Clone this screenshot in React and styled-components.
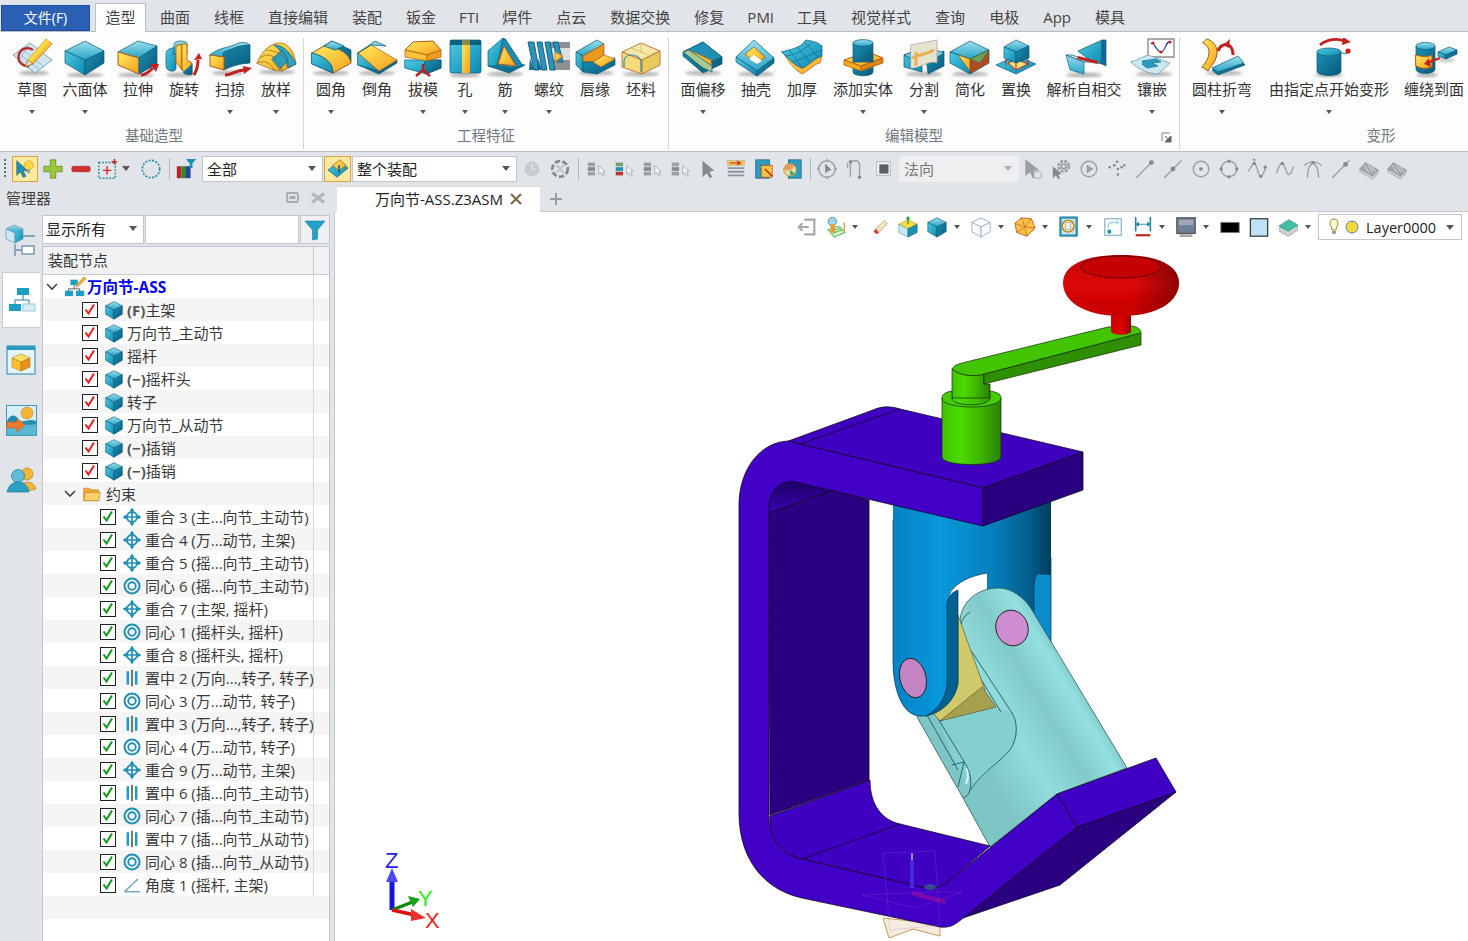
import React from "react";
import styled, { createGlobalStyle } from "styled-components";

const GlobalStyle = createGlobalStyle`
  html, body {
    margin: 0;
    width: 1468px;
    height: 941px;
    overflow: hidden;
    background: #e1e4e8;
    font-family: "Open Sans", "Noto Sans CJK SC", sans-serif;
    color: #333;
  }
  svg { display: block; flex: none; }
`;

const Page = styled.div`
  display: flex;
  flex-direction: column;
  width: 1468px;
  height: 941px;
  overflow: hidden;
`;

/* ---------- tab strip ---------- */
const TabBar = styled.div`
  display: flex;
  align-items: flex-end;
  height: 31px;
  padding-left: 1px;
  background: #e1e4e8;
  border-bottom: 1px solid #b9bec4;
`;
const FileButton = styled.div`
  width: 89px;
  height: 26px;
  margin: 0 5px 0 0;
  line-height: 24px;
  box-sizing: border-box;
  text-align: center;
  color: #fff;
  font-size: 14px;
  background: #2b5fb4;
  border: 1px solid #1c4ea3;
`;
const RibbonTab = styled.div`
  height: ${(p) => (p.$active ? "28px" : "27px")};
  line-height: 27px;
  padding: 0 ${(p) => (p.$active ? "9.5px" : p.$latin ? "11px" : "12px")};
  margin-right: ${(p) => (p.$active ? "2px" : "0")};
  margin-bottom: ${(p) => (p.$active ? "-1px" : "0")};
  font-size: 15px;
  color: #444;
  ${(p) =>
    p.$active &&
    `background:#fdfdfd;border:1px solid #b9bec4;border-bottom:none;`}
`;

/* ---------- ribbon ---------- */
const Ribbon = styled.div`
  display: flex;
  height: 119px;
  padding-top: 6px;
  box-sizing: border-box;
  background: #fdfdfd;
`;
const Group = styled.div`
  position: relative;
  display: flex;
  flex-direction: column;
  flex: none;
  box-sizing: border-box;
  width: ${(p) => p.$w}px;
  height: 111px;
  padding-left: ${(p) => p.$pad}px;
  border-right: ${(p) => (p.$last ? "none" : "1px solid #d3d5d8")};
`;
const GroupItems = styled.div`
  display: flex;
`;
const Item = styled.div`
  display: flex;
  flex-direction: column;
  align-items: center;
  flex: none;
  width: ${(p) => p.$w}px;
`;
const ItemLabel = styled.div`
  margin-top: 1px;
  height: 20px;
  line-height: 20px;
  font-size: 15px;
  color: #333;
  white-space: nowrap;
`;
const Caret = styled.span`
  display: block;
  flex: none;
  width: 0;
  height: 0;
  border-style: solid;
  border-width: ${(p) => (p.$big ? "5px 4px 0" : "4px 3.5px 0")};
  border-color: ${(p) => p.$c || "#555"} transparent transparent;
`;
const ItemCaret = styled(Caret)`
  margin-top: 11px;
`;
const GroupFoot = styled.div`
  margin-top: auto;
  height: 25px;
  line-height: 24px;
  padding-left: ${(p) => p.$shift || 0}px;
  padding-right: ${(p) => p.$back || 0}px;
  text-align: center;
  font-size: 14.5px;
  color: #717780;
`;
const Launcher = styled.div`
  position: absolute;
  right: 7px;
  bottom: 6px;
`;

/* ---------- command toolbar ---------- */
const ToolBar = styled.div`
  display: flex;
  align-items: center;
  height: 34px;
  padding-left: 4px;
  box-sizing: border-box;
  background: #e1e4e8;
  border-top: 1px solid #b8bec6;
`;
const Grip = styled.div`
  width: 2px;
  height: 20px;
  background: repeating-linear-gradient(#5a6b96 0 2px, transparent 2px 4px);
`;
const Slot = styled.div`
  display: flex;
  align-items: center;
  justify-content: center;
  flex: none;
  width: ${(p) => p.$w || 28}px;
  margin-left: ${(p) => p.$ml || 0}px;
`;
const Hot = styled(Slot)`
  height: 26px;
  box-sizing: border-box;
  background: #fde9a0;
  border: 1px solid #d9a441;
`;
const Sep = styled.div`
  flex: none;
  width: 1px;
  height: 22px;
  margin-left: ${(p) => p.$ml || 0}px;
  background: #b5b9bf;
`;
const Combo = styled.div`
  display: flex;
  align-items: center;
  justify-content: space-between;
  flex: none;
  box-sizing: border-box;
  width: ${(p) => p.$w}px;
  height: 26px;
  margin-left: ${(p) => p.$ml || 0}px;
  padding: 0 6px 1px 4px;
  font-size: 15px;
  color: ${(p) => (p.$off ? "#777" : "#222")};
  background: ${(p) => (p.$off ? "#eeeff0" : "#fff")};
  border: 1px solid ${(p) => (p.$off ? "#eeeff0" : "#c3c7cc")};
`;

/* ---------- manager title + document tabs ---------- */
const TitleRow = styled.div`
  display: flex;
  height: 27px;
  background: #e1e4e8;
`;
const ManagerHead = styled.div`
  display: flex;
  align-items: center;
  flex: none;
  box-sizing: border-box;
  width: 337px;
  padding: 0 11px 2px 6px;
  font-size: 15px;
  color: #444;
`;
const ManagerName = styled.span`
  margin-right: auto;
`;
const DocTabs = styled.div`
  display: flex;
  flex: 1;
  box-sizing: border-box;
  padding-top: 1px;
  border-bottom: 1px solid #c4c8cd;
`;
const DocTab = styled.div`
  display: flex;
  align-items: center;
  box-sizing: border-box;
  width: 203px;
  height: 26px;
  padding: 0 0 2px 38px;
  font-size: 15px;
  color: #222;
  background: #fff;
  border-top: 1px solid #d7dade;
`;
const DocClose = styled.span`
  margin-left: 7px;
`;
const AddTab = styled.div`
  margin-left: 9px;
  align-self: center;
`;

/* ---------- body ---------- */
const Body = styled.div`
  display: flex;
  flex: 1;
  min-height: 0;
`;
const Side = styled.div`
  display: flex;
  flex: none;
  width: 335px;
  background: #e1e4e8;
  border-right: 1px solid #c4c8cd;
  box-sizing: border-box;
`;
const Rail = styled.div`
  display: flex;
  flex-direction: column;
  gap: 4px;
  flex: none;
  width: 42px;
`;
const RailTab = styled.div`
  display: flex;
  align-items: center;
  justify-content: center;
  box-sizing: border-box;
  height: 56px;
  margin: 0 2px;
  ${(p) => p.$active && `background:#fff;border:1px solid #c8ccd1;border-right:none;`}
`;
const ManagerPane = styled.div`
  display: flex;
  flex-direction: column;
  flex: none;
  width: 288px;
  padding-top: 3px;
`;
const FilterRow = styled.div`
  display: flex;
  gap: 1px;
  height: 29px;
  margin-bottom: 2px;
`;
const FilterCombo = styled.div`
  display: flex;
  align-items: center;
  justify-content: space-between;
  box-sizing: border-box;
  width: ${(p) => p.$w}px;
  padding: 0 6px 2px 3px;
  font-size: 15px;
  color: #222;
  background: #fff;
  border: 1px solid #c3c7cc;
`;
const FilterButton = styled(FilterCombo)`
  justify-content: center;
  padding: 0;
  background: #eef0f2;
`;
const TreePane = styled.div`
  flex: 1;
  background: #fff;
  border: 1px solid #c3c7cc;
  border-bottom: none;
`;
const TreeHead = styled.div`
  display: flex;
  height: 28px;
  background: #f0f1f3;
  border-bottom: 1px solid #c6cacf;
  box-sizing: border-box;
`;
const TreeHeadCell = styled.div`
  width: 271px;
  padding-left: 5px;
  box-sizing: border-box;
  line-height: 27px;
  font-size: 15px;
  color: #333;
  border-right: 1px solid #c6cacf;
`;
const Row = styled.div`
  height: 23px;
  background: ${(p) => (p.$odd ? "#f5f5f5" : "#fff")};
`;
const RowMain = styled.div`
  display: flex;
  align-items: center;
  box-sizing: border-box;
  width: 271px;
  height: 23px;
  padding-left: ${(p) => p.$indent}px;
  border-right: 1px solid #d4d7db;
  font-size: 15px;
  color: #3a3a3a;
  white-space: nowrap;
`;
const Expander = styled.span`
  display: block;
  width: 18px;
`;
const CheckBox = styled.span`
  display: block;
  flex: none;
  box-sizing: border-box;
  width: 16px;
  height: 16px;
  margin-right: 6px;
  background: #fff;
  border: 1.5px solid #222;
`;
const RowIcon = styled.span`
  display: block;
  flex: none;
  margin-right: ${(p) => p.$mr}px;
`;
const RootLabel = styled.span`
  font-weight: 700;
  color: #0000ff;
  font-size: 15.5px;
`;
const Mark = styled.b`
  color: #555;
`;

/* ---------- viewport ---------- */
const Viewport = styled.div`
  display: flex;
  flex-direction: column;
  flex: 1;
  min-width: 0;
  background: #fff;
`;
const ViewBar = styled.div`
  display: flex;
  align-items: center;
  justify-content: flex-end;
  flex: none;
  height: 30px;
  padding-right: 6px;
`;
const LayerBox = styled.div`
  display: flex;
  align-items: center;
  box-sizing: border-box;
  width: 144px;
  height: 26px;
  margin-left: 5px;
  padding: 0 7px 0 10px;
  font-size: 14.5px;
  color: #222;
  background: #fff;
  border: 1px solid #c3c7cc;
`;
const LayerName = styled.span`
  margin: 0 auto 0 7px;
`;
const Scene = styled.svg`
  flex: none;
  width: 1133px;
  height: 699px;
`;

/* ---------- shared svg paint ---------- */
const Paint = () => (
  <svg width="0" height="0" style={{ position: "absolute" }}>
    <defs>
      <linearGradient id="rTop" x1="0" y1="0" x2="0" y2="1">
        <stop offset="0" stopColor="#9be0ee" />
        <stop offset="1" stopColor="#2aa3c4" />
      </linearGradient>
      <linearGradient id="rFront" x1="0" y1="0" x2="1" y2="1">
        <stop offset="0" stopColor="#4ecbe2" />
        <stop offset="1" stopColor="#0b88b0" />
      </linearGradient>
      <linearGradient id="rSide" x1="0" y1="0" x2="1" y2="1">
        <stop offset="0" stopColor="#1a93b6" />
        <stop offset="1" stopColor="#0a5878" />
      </linearGradient>
      <linearGradient id="rYel" x1="0" y1="0" x2="1" y2="1">
        <stop offset="0" stopColor="#ffec60" />
        <stop offset="1" stopColor="#f69f1c" />
      </linearGradient>
      <filter id="soft" x="-30%" y="-100%" width="160%" height="300%">
        <feGaussianBlur stdDeviation="1.4" />
      </filter>
      <linearGradient id="cBlue" gradientUnits="userSpaceOnUse" x1="893" y1="0" x2="1052" y2="0">
        <stop offset="0" stopColor="#0482c4" />
        <stop offset=".3" stopColor="#0898dc" />
        <stop offset=".62" stopColor="#0480bd" />
        <stop offset=".85" stopColor="#045f8e" />
        <stop offset="1" stopColor="#013c5c" />
      </linearGradient>
      <linearGradient id="cArm" gradientUnits="userSpaceOnUse" x1="893" y1="0" x2="1052" y2="0">
        <stop offset="0" stopColor="#0482c4" />
        <stop offset=".3" stopColor="#0898dc" />
        <stop offset=".62" stopColor="#0480bd" />
        <stop offset=".85" stopColor="#0484c4" />
        <stop offset="1" stopColor="#0898dc" />
      </linearGradient>
      <linearGradient id="cCyan" gradientUnits="userSpaceOnUse" x1="985" y1="770" x2="1095" y2="704">
        <stop offset="0" stopColor="#7ec6c6" />
        <stop offset=".35" stopColor="#92dcdc" />
        <stop offset=".65" stopColor="#82caca" />
        <stop offset=".88" stopColor="#94e0e0" />
        <stop offset="1" stopColor="#7cc4c4" />
      </linearGradient>
      <linearGradient id="cGreen" x1="0" y1="0" x2="1" y2="0">
        <stop offset="0" stopColor="#3fc000" />
        <stop offset=".3" stopColor="#4cdc00" />
        <stop offset=".6" stopColor="#40bc00" />
        <stop offset="1" stopColor="#2b8000" />
      </linearGradient>
      <linearGradient id="cKnob" x1="0" y1="0" x2="0" y2="1">
        <stop offset="0" stopColor="#c00000" />
        <stop offset=".5" stopColor="#de0a0a" />
        <stop offset=".72" stopColor="#d00000" />
        <stop offset="1" stopColor="#c80000" />
      </linearGradient>
      <linearGradient id="cKnobShade" x1="0" y1="0" x2="1" y2="0">
        <stop offset=".6" stopColor="#500000" stopOpacity="0" />
        <stop offset="1" stopColor="#500000" stopOpacity=".55" />
      </linearGradient>
      <linearGradient id="cStem" x1="0" y1="0" x2="1" y2="0">
        <stop offset="0" stopColor="#cc0000" />
        <stop offset=".5" stopColor="#e00000" />
        <stop offset="1" stopColor="#980000" />
      </linearGradient>
      <linearGradient id="cArch" x1="0" y1="0" x2="0" y2="1">
        <stop offset="0" stopColor="#1a0060" />
        <stop offset="1" stopColor="#3a00b0" />
      </linearGradient>
    </defs>
  </svg>
);

const E = "#0a5a78";
const Soft = ({ cx = 24, cy = 37, rx = 18, ry = 2.6 }) => (
  <ellipse cx={cx} cy={cy} rx={rx} ry={ry} fill="#000" opacity=".28" filter="url(#soft)" />
);
const Poly = ({ p, f, s = E, w = 0.7 }) => <polygon points={p} fill={f} stroke={s} strokeWidth={w} strokeLinejoin="round" />;
const Dr = ({ d, f = "none", s = E, w = 0.7 }) => <path d={d} fill={f} stroke={s} strokeWidth={w} strokeLinejoin="round" strokeLinecap="round" />;
const RedArrow = ({ d, head }) => (
  <g>
    <path d={d} fill="none" stroke="#c3201f" strokeWidth="3" />
    <polygon points={head} fill="#c3201f" />
  </g>
);
const R = ({ children }) => (
  <svg width="48" height="40" viewBox="0 0 48 40">
    {children}
  </svg>
);

/* ---------- ribbon icons ---------- */
const RI = {
  sketch: (
    <R>
      <Soft cx="26" cy="35" rx="15" />
      <Poly p="5,17 22,5 44,22 27,35" f="#cfe6f0" s="#5a8ea8" />
      <path d="M14 11 L35 28 M9 14 L31 31 M20 7 L10 25 M30 13 L19 31" stroke="#7fb0c8" strokeWidth=".7" fill="none" />
      <path d="M25 12 A9 9 0 1 0 21 28" fill="none" stroke="#c32222" strokeWidth="2.2" />
      <Poly p="38,1 44,6 25,26 20,22" f="url(#rYel)" s="#b8690f" />
      <Poly p="20,22 25,26 17,29" f="#f3e0b8" s="#7a5a20" />
      <Poly p="38,1 41,3.5 23,24 20,22" f="#ffd845" s="none" w={0} />
    </R>
  ),
  hex: (
    <R>
      <Soft />
      <Poly p="24,3 43,13 24,22 4,13" f="url(#rTop)" />
      <Poly p="4,13 24,22 24,37 4,25" f="url(#rFront)" />
      <Poly p="24,22 43,13 43,25 24,37" f="url(#rSide)" />
    </R>
  ),
  extrude: (
    <R>
      <Soft cx="22" />
      <Poly p="4,14 24,3 43,8 25,20" f="url(#rTop)" />
      <Poly p="4,14 25,20 25,36 4,27" f="url(#rYel)" s="#b35a12" w={1} />
      <Poly p="25,20 43,8 43,26 25,36" f="url(#rSide)" />
      <RedArrow d="M27 37 C32 37 36 33 39 30" head="36,26 45,26 42,34" />
    </R>
  ),
  revolve: (
    <R>
      <Soft cx="20" rx="14" />
      <Dr d="M6 16 C6 11 12 9 16 10 L16 30 C16 35 6 34 6 28 Z" f="url(#rFront)" />
      <Dr d="M14 6 C14 2 27 2 27 6 L27 16 L14 16 Z" f="url(#rTop)" />
      <Poly p="16,8 22,6 22,32 16,24" f="url(#rYel)" s="#b35a12" w={.9} />
      <Poly p="22,6 27,6 27,22 32,25 32,37 22,32" f="url(#rYel)" s="#b35a12" w={.9} />
      <Dr d="M32 26 L32 36 C28 38 24 36 23 34" f="url(#rSide)" />
      <RedArrow d="M34 37 C37 32 38 27 38 22" head="34,22 42,21 39,15" />
    </R>
  ),
  sweep: (
    <R>
      <Soft cx="22" cy="35" rx="16" />
      <Dr d="M4 17 C14 11 20 13 28 10 C34 8 39 6 44 7 L44 25 C34 26 28 27 18 32 Z" f="url(#rSide)" />
      <Dr d="M4 17 C12 10 20 10 28 7 C34 4 38 3 44 7 C38 7 32 8 28 10 C22 13 14 13 18 19 Z" f="url(#rTop)" />
      <Poly p="4,17 18,19 18,32 4,28" f="url(#rYel)" s="#b35a12" w={1} />
      <RedArrow d="M19 37 C26 37 30 32 38 32" head="37,28 46,30 38,36" />
    </R>
  ),
  loft: (
    <R>
      <Soft cx="25" cy="34" />
      <Dr d="M5 25 C10 12 20 4 30 5 C38 7 43 16 44 26 L30 33 L22 32 Z" f="url(#rYel)" s="#9a5a14" />
      <Dr d="M22 7 C30 7 37 12 44 26 L36 30 C33 20 30 13 22 7 Z" f="#2aa3c4" />
      <Dr d="M20 21 L30 12 L36 22 L28 31 Z" f="#25a0c0" />
      <Dr d="M5 25 C12 22 18 24 22 32 M8 20 C16 14 24 16 30 33 M14 12 C24 12 34 18 38 29" s="#9a5a14" />
    </R>
  ),
  fillet: (
    <R>
      <Soft cx="24" cy="35" />
      <Dr d="M5 15 L25 3 L44 12 L44 25 L26 35 L5 26 Z" f="url(#rSide)" />
      <Dr d="M5 15 L17 8 C34 10 42 16 44 25 L26 35 C26 24 17 18 5 15 Z" f="url(#rYel)" s="#b35a12" />
      <Dr d="M5 15 C17 18 26 24 26 35 L5 26 Z" f="url(#rFront)" />
      <Poly p="17,8 25,3 37,8 28,12" f="url(#rTop)" />
    </R>
  ),
  chamfer: (
    <R>
      <Soft cx="24" cy="35" />
      <Poly p="5,15 5,27 26,36 44,25 44,22 26,33" f="url(#rSide)" />
      <Dr d="M5 15 L26 33 L5 27 Z" f="url(#rFront)" />
      <Poly p="18,7 44,22 26,33 5,15" f="url(#rYel)" s="#b35a12" />
      <Poly p="5,15 22,3 33,8 18,7" f="url(#rTop)" />
    </R>
  ),
  draft: (
    <R>
      <Dr d="M6 22 L42 22 L42 30 L27 36 L6 30 Z" f="url(#rFront)" />
      <Poly p="25,22 42,22 42,30 27,36" f="url(#rSide)" />
      <Poly p="14,4 34,3 42,12 28,17 6,12" f="url(#rYel)" s="#b35a12" w={1} />
      <Poly p="6,12 28,17 28,23 6,19" f="#f8c43a" s="#b35a12" />
      <Poly p="28,17 42,12 42,19 28,23" f="#ea9d1e" s="#b35a12" />
      <path d="M24 26 L24 32 M24 32 L17 38 M24 32 L31 38" stroke="#bb1d1d" strokeWidth="2.4" fill="none" />
    </R>
  ),
  hole: (
    <R>
      <Soft cy="37" rx="15" />
      <rect x="9" y="2" width="31" height="33" rx="2" fill="url(#rFront)" stroke={E} strokeWidth=".7" />
      <rect x="21" y="2" width="8" height="33" fill="url(#rYel)" />
      <rect x="9" y="2" width="31" height="5" fill="#0f5f80" />
      <rect x="21" y="2" width="8" height="5" fill="#8a8a50" />
    </R>
  ),
  rib: (
    <R>
      <Soft cx="24" cy="36" />
      <Poly p="7,28 24,24 44,27 28,35" f="url(#rSide)" />
      <Poly p="7,13 22,0 25,2 16,28 7,28" f="url(#rFront)" />
      <Poly p="22,0 25,2 42,28 30,30 16,28" f="#1a8bb2" />
      <Poly p="23,8 35,28 17,26" f="url(#rYel)" s="#b35a12" w={1} />
    </R>
  ),
  thread: (
    <R>
      <rect x="25" y="4" width="20" height="28" fill="#8d9094" />
      <rect x="25" y="10" width="20" height="12" fill="#dcdedf" />
      <path d="M3 4 L9 4 L14 32 L9 32 Z M12 4 L17 4 L22 32 L17 32 Z M20 4 L25 4 L30 32 L25 32 Z M28 4 L33 4 L38 24 L33 24 Z" fill="#2c93bd" stroke="#0b5a7a" strokeWidth=".9" />
      <path d="M4 32 L5 20 L9 32 Z M12 32 L13 20 L17 32 Z" fill="#1a6d92" />
      <Poly p="30,14 38,18 30,24" f="url(#rYel)" s="#b35a12" />
    </R>
  ),
  lip: (
    <R>
      <Soft cx="25" cy="35" />
      <Poly p="5,14 26,2 33,6 12,18" f="url(#rTop)" />
      <Poly p="5,14 12,18 12,34 5,27" f="url(#rFront)" />
      <Poly p="12,18 33,6 33,17 22,24 12,24" f="#e79a1d" s="#a3560e" />
      <Poly p="12,34 12,24 22,24 44,20 44,27 26,36" f="url(#rSide)" />
      <Poly p="22,24 33,17 44,21 30,29" f="url(#rYel)" s="#b35a12" />
    </R>
  ),
  blank: (
    <R>
      <Soft cy="36" />
      <Poly p="5,14 24,5 43,13 25,22" f="#f6e8a8" s="#c07a40" w={1} />
      <Poly p="5,14 25,22 25,36 5,29" f="#f6dc7a" s="#c07a40" w={1} />
      <Poly p="25,22 43,13 43,27 25,36" f="#e9c95c" s="#c07a40" w={1} />
      <path d="M7 29 L7 23 C7 15 22 15 24 23 L24 34" fill="none" stroke="#2f8aa6" strokeWidth="1.2" />
      <path d="M14 10 L34 18 M24 5 L24 15" stroke="#d6b76a" strokeWidth=".8" />
    </R>
  ),
  offset: (
    <R>
      <Soft cy="35" />
      <Poly p="4,14 24,4 43,19 43,26 24,35 4,18" f="url(#rSide)" />
      <Poly p="4,14 24,4 43,19 25,27" f="#1f8fb4" />
      <Poly p="4,14 25,27 33,28 32,22 10,12" f="url(#rYel)" s="#b35a12" />
      <Poly p="4,14 10,12 33,28 33,34 24,30" f="#a8c890" s={E} />
    </R>
  ),
  shell: (
    <R>
      <Soft cy="36" />
      <Poly p="4,19 22,2 42,20 25,33" f="url(#rTop)" />
      <Poly p="4,19 25,33 25,38 4,24" f="url(#rFront)" />
      <Poly p="25,33 42,20 42,25 25,38" f="url(#rSide)" />
      <Poly p="13,16 22,9 33,19 25,26" f="url(#rYel)" s="#a3560e" />
      <Poly p="17,21 22,17 30,23 25,26" f="#fff" s="none" w={0} />
    </R>
  ),
  thicken: (
    <R>
      <Dr d="M4 14 C9 18 11 28 24 36 C32 32 36 26 42 25 L44 18 C38 20 30 28 24 30 C14 26 10 18 4 14 Z" f="url(#rYel)" s="#b35a12" />
      <Dr d="M4 14 C12 11 22 11 28 2 C34 3 40 4 44 8 C44 14 44 18 44 18 C36 20 30 28 24 30 C14 26 10 20 4 14 Z" f="url(#rFront)" />
      <path d="M11 12 C16 18 20 24 24 30 M19 9 C24 15 29 20 33 25 M26 4 C31 9 36 13 40 20 M7 18 C16 17 24 14 33 5 M14 24 C22 22 32 16 44 12" stroke="#0d6c92" strokeWidth=".7" fill="none" />
    </R>
  ),
  addsolid: (
    <R>
      <Dr d="M14 24 L14 34 C14 39 34 39 34 34 L34 24 Z" f="url(#rSide)" />
      <Poly p="5,22 29,14 44,20 22,28" f="url(#rYel)" s="#b35a12" w={1} />
      <Poly p="5,22 22,28 22,33 5,27" f="#f1a91d" s="#b35a12" />
      <Poly p="22,28 44,20 44,25 22,33" f="#d98716" s="#b35a12" />
      <rect x="14" y="5" width="20" height="19" fill="url(#rSide)" stroke={E} strokeWidth=".7" />
      <ellipse cx="24" cy="5" rx="10" ry="3.4" fill="url(#rTop)" stroke={E} strokeWidth=".7" />
    </R>
  ),
  split: (
    <R>
      <Soft cy="36" />
      <Poly p="4,17 22,10 22,34 4,29" f="url(#rFront)" />
      <Poly p="4,17 17,12 30,22 20,25" f="url(#rTop)" />
      <Poly p="26,20 44,13 44,28 28,36" f="url(#rSide)" />
      <Poly p="26,20 36,12 44,15 30,24" f="url(#rTop)" />
      <Dr d="M11 7 L37 2 L37 25 C30 22 24 28 14 30 L11 30 Z" f="#e8e3d0" s="#9aa0a4" />
      <path d="M16 28 L16 14 M12 20 C20 16 28 16 34 12" stroke="#e79a1d" strokeWidth="3" fill="none" opacity=".7" />
    </R>
  ),
  simplify: (
    <R>
      <Soft cy="36" />
      <Poly p="4,14 24,3 43,12 24,21" f="url(#rTop)" />
      <Poly p="24,21 43,12 43,25 24,36" f="#b44a22" />
      <Poly p="4,14 24,21 24,36 4,25" f="url(#rFront)" />
      <Poly p="12,17 24,21 24,33" f="url(#rYel)" s="#a3560e" />
      <Poly p="24,21 43,12 34,25" f="#6fa05a" s="#486f38" />
    </R>
  ),
  replace: (
    <R>
      <Poly p="4,27 24,18 44,26 24,36" f="url(#rFront)" />
      <Poly p="16,25 24,21 36,26 24,32" f="#f7dc78" s="#b32222" w={1} />
      <Poly p="12,9 24,2 37,8 24,14" f="url(#rTop)" />
      <Poly p="12,9 24,14 24,25 12,20" f="url(#rFront)" />
      <Poly p="24,14 37,8 37,20 24,25" f="url(#rSide)" />
      <path d="M14 21 L14 27 M36 21 L36 27 M24 25 L24 32" stroke="#b32222" strokeWidth="1" />
    </R>
  ),
  selfint: (
    <R>
      <Soft cy="37" />
      <Poly p="6,17 24,24 24,36 10,32" f="url(#rTop)" s="#0d6c92" />
      <Poly p="6,17 12,17 32,24 24,24" f="#cfeaf1" />
      <Poly p="18,13 42,2 42,26 32,24" f="url(#rFront)" />
      <Poly p="42,2 46,2 46,28 42,26" f="#14698d" s={E} />
      <Poly p="18,18 38,23 37,26 17,21" f="#c32222" s="none" w={0} />
    </R>
  ),
  inlay: (
    <R>
      <Poly p="20,1 46,1 46,19 20,19" f="#fff" s="#8a8d90" w={1.4} />
      <path d="M23 6 C26 2 28 14 33 14 C38 14 37 2 43 4" fill="none" stroke="#2a3f9e" strokeWidth="1.2" />
      <circle cx="25" cy="5" r="1.6" fill="#c32222" />
      <circle cx="33" cy="14" r="1.6" fill="#c32222" />
      <circle cx="42" cy="4" r="1.6" fill="#c32222" />
      <Soft cx="26" cy="36" />
      <Dr d="M3 24 C10 22 14 19 20 17 L42 25 C38 29 34 32 30 36 C22 36 10 32 3 24 Z" f="#c9e8f0" s="#5a97b2" />
      <path d="M14 23 L28 21 L33 24 L24 25 L30 28 L19 30 L14 26" fill="#2d9bbd" stroke="#0d6c92" strokeWidth=".7" />
    </R>
  ),
  bend: (
    <R>
      <Soft cx="26" cy="35" />
      <Poly p="14,32 40,21 47,27 20,37" f="url(#rSide)" />
      <Poly p="14,30 40,18 46,25 20,34" f="url(#rTop)" />
      <Dr d="M9 1 C18 4 21 12 18 20 C16 26 12 29 10 33 L4 29 C8 24 11 20 11 14 C11 10 8 6 5 5 Z" f="url(#rYel)" s="#9a5a14" w={1} />
      <RedArrow d="M20 13 C22 7 28 5 32 8 C34 10 35 13 35 17" head="25,7 32,1 31,10" />
    </R>
  ),
  deform: (
    <R>
      <Soft cy="37" rx="14" />
      <path d="M12 14 L12 33 C12 39 36 39 36 33 L36 14 Z" fill="url(#rSide)" stroke={E} strokeWidth=".7" />
      <ellipse cx="24" cy="14" rx="12" ry="4" fill="url(#rFront)" stroke={E} strokeWidth=".7" />
      <path d="M36 14 C38 16 42 16 43 14" stroke="#0d6c92" fill="none" />
      <circle cx="43" cy="13" r="2.6" fill="#c32222" />
      <path d="M15 7 C22 1 32 0 40 3" stroke="#c32222" strokeWidth="2.6" fill="none" />
      <polygon points="38,-1 46,4 37,7" fill="#c32222" />
    </R>
  ),
  wrap: (
    <R>
      <Soft cx="17" rx="11" />
      <path d="M6 8 L6 31 C6 37 25 37 25 31 L25 8 Z" fill="url(#rSide)" stroke={E} strokeWidth=".7" />
      <ellipse cx="15.5" cy="8" rx="9.5" ry="3.6" fill="url(#rTop)" stroke={E} strokeWidth=".7" />
      <Dr d="M6 17 C12 19 18 19 22 17 L22 29 C16 31 12 31 6 28 Z" f="url(#rYel)" s="#b35a12" w={1} />
      <Soft cx="36" cy="22" rx="9" ry="1.6" />
      <Poly p="28,14 39,9 47,12 36,17" f="url(#rTop)" />
      <Poly p="28,14 36,17 36,21 28,18" f="url(#rFront)" />
      <Poly p="36,17 47,12 47,16 36,21" f="url(#rSide)" />
      <path d="M30 20 L17 25" stroke="#c32222" strokeWidth="2.2" />
      <polygon points="19,20 14,26 21,29" fill="#c32222" />
    </R>
  ),
};

/* ---------- little helpers for 24 x 24 icons ---------- */
const T = ({ s = 22, children }) => (
  <svg width={s} height={s} viewBox="0 0 24 24">
    {children}
  </svg>
);
const G = "#9ca0a5";
const GD = "#85898e";

const Cube = ({ s = 20, top = "url(#rTop)", l = "url(#rFront)", r = "url(#rSide)", e = "#0a5a78" }) => (
  <T s={s}>
    <polygon points="12,2 22,7 12,12 2,7" fill={top} stroke={e} strokeWidth=".7" />
    <polygon points="2,7 12,12 12,23 2,17" fill={l} stroke={e} strokeWidth=".7" />
    <polygon points="12,12 22,7 22,17 12,23" fill={r} stroke={e} strokeWidth=".7" />
  </T>
);
const GrayNode = ({ tint }) => (
  <T>
    <rect x="3" y="5" width="8" height="4" fill={tint ? "#7a9a70" : G} />
    <rect x="3" y="10" width="8" height="4" fill={tint ? "#1f8fb4" : GD} />
    <rect x="3" y="15" width="8" height="4" fill={tint ? "#b33" : G} />
    <path d="M15 8 L15 18 L17.5 16 L19 20 L21 19 L19.5 15 L22 15 Z" fill="#f4f5f6" stroke={G} strokeWidth=".8" />
  </T>
);
const GrayLine = ({ children }) => (
  <T>
    <g fill="none" stroke={G} strokeWidth="1.5" strokeLinecap="round">
      {children}
    </g>
  </T>
);
const Dot = ({ x, y, r = 1.8 }) => <circle cx={x} cy={y} r={r} fill={GD} stroke="none" />;
const GrayStack = () => (
  <T>
    <polygon points="2,12 8,5 22,13 16,20" fill="#a5a8ac" stroke="#7d8084" strokeWidth=".6" />
    <polygon points="2,15 16,23 22,16 22,13 16,20 2,12" fill="#d2d4d6" stroke="#7d8084" strokeWidth=".6" />
    <path d="M7 8 L12 16 M11 7 L16 15 M15 9 L19 15" stroke="#eee" strokeWidth=".8" />
  </T>
);

/* ---------- data ---------- */
const tabs = ["曲面", "线框", "直接编辑", "装配", "钣金", "FTI", "焊件", "点云", "数据交换", "修复", "PMI", "工具", "视觉样式", "查询", "电极", "App", "模具"];

const groups = [
  {
    label: "基础造型", w: 304, pad: 9, back: 4,
    items: [
      ["草图", 46, "sketch", 1], ["六面体", 60, "hex", 1], ["拉伸", 46, "extrude", 0],
      ["旋转", 46, "revolve", 0], ["扫掠", 46, "sweep", 1], ["放样", 46, "loft", 1],
    ],
  },
  {
    label: "工程特征", w: 365, pad: 4, back: 4,
    items: [
      ["圆角", 46, "fillet", 1], ["倒角", 46, "chamfer", 0], ["拔模", 46, "draft", 1],
      ["孔", 38, "hole", 1], ["筋", 42, "rib", 1], ["螺纹", 46, "thread", 1],
      ["唇缘", 46, "lip", 0], ["坯料", 46, "blank", 0],
    ],
  },
  {
    label: "编辑模型", w: 511, pad: 4, back: 24, launcher: true,
    items: [
      ["面偏移", 60, "offset", 1], ["抽壳", 46, "shell", 0], ["加厚", 46, "thicken", 0],
      ["添加实体", 76, "addsolid", 1], ["分割", 46, "split", 1], ["简化", 46, "simplify", 0],
      ["置换", 46, "replace", 0], ["解析自相交", 90, "selfint", 0], ["镶嵌", 46, "inlay", 1],
    ],
  },
  {
    label: "变形", w: 288, pad: 4, shift: 110, last: true,
    items: [
      ["圆柱折弯", 76, "bend", 1], ["由指定点开始变形", 138, "deform", 1], ["缠绕到面", 72, "wrap", 0],
    ],
  },
];

const parts = [
  [<><Mark>(F)</Mark>主架</>],
  ["万向节_主动节"],
  ["摇杆"],
  [<><Mark>(−)</Mark>摇杆头</>],
  ["转子"],
  ["万向节_从动节"],
  [<><Mark>(−)</Mark>插销</>],
  [<><Mark>(−)</Mark>插销</>],
];

const constraints = [
  ["coin", "重合 3 (主...向节_主动节)"],
  ["coin", "重合 4 (万...动节, 主架)"],
  ["coin", "重合 5 (摇...向节_主动节)"],
  ["conc", "同心 6 (摇...向节_主动节)"],
  ["coin", "重合 7 (主架, 摇杆)"],
  ["conc", "同心 1 (摇杆头, 摇杆)"],
  ["coin", "重合 8 (摇杆头, 摇杆)"],
  ["mid", "置中 2 (万向...,转子, 转子)"],
  ["conc", "同心 3 (万...动节, 转子)"],
  ["mid", "置中 3 (万向...,转子, 转子)"],
  ["conc", "同心 4 (万...动节, 转子)"],
  ["coin", "重合 9 (万...动节, 主架)"],
  ["mid", "置中 6 (插...向节_主动节)"],
  ["conc", "同心 7 (插...向节_主动节)"],
  ["mid", "置中 7 (插...向节_从动节)"],
  ["conc", "同心 8 (插...向节_从动节)"],
  ["angle", "角度 1 (摇杆, 主架)"],
];

const ConstraintIcon = ({ kind }) => {
  if (kind === "coin")
    return (
      <T s={20}>
        <circle cx="12" cy="12" r="6" fill="none" stroke="#1f8fb4" strokeWidth="2.4" />
        <path d="M12 2 V22 M2 12 H22" stroke="#1f8fb4" strokeWidth="2" />
        <path d="M12 1 L15 5 H9 Z M12 23 L15 19 H9 Z M1 12 L5 9 V15 Z M23 12 L19 9 V15 Z" fill="#1f8fb4" />
      </T>
    );
  if (kind === "conc")
    return (
      <T s={20}>
        <circle cx="12" cy="12" r="9" fill="none" stroke="#1f8fb4" strokeWidth="2.4" />
        <circle cx="12" cy="12" r="4.5" fill="none" stroke="#1f8fb4" strokeWidth="2.2" />
      </T>
    );
  if (kind === "mid")
    return (
      <T s={20}>
        <path d="M12 2 V22" stroke="#333" strokeWidth="1.6" />
        <path d="M7 4 V20 M17 4 V20" stroke="#1f9ac4" strokeWidth="3" />
      </T>
    );
  return (
    <T s={20}>
      <path d="M3 20 H22 M3 20 L19 5" stroke="#7aa9bd" strokeWidth="1.8" fill="none" />
    </T>
  );
};

const Chevron = () => (
  <svg width="12" height="8" viewBox="0 0 12 8">
    <path d="M1 1 L6 6 L11 1" fill="none" stroke="#444" strokeWidth="1.6" />
  </svg>
);
const Tick = ({ c }) => (
  <svg width="13" height="13" viewBox="0 0 13 13">
    <path d="M2.5 6.5 L5.5 10.5 L11 1.5" fill="none" stroke={c} strokeWidth="2" />
  </svg>
);

/* ---------- the model in the viewport ---------- */
const L = "#10082a";
const Model = () => (
  <Scene viewBox="335 242 1133 699">
    {/* origin plane under the part */}
    <polygon points="883,918 889,938 913,929 940,936 940,924" fill="#f5ece0" stroke="#c69a58" strokeWidth="1" />
    {/* blue yoke, far arm */}
    <path d="M987 560 L1051 560 L1051 650 L987 650 Z" fill="url(#cBlue)" />
    <path d="M1034 590 C1034 572 1042 560 1051 557 L1051 650 L1034 625 Z" fill="#0a8ccd" stroke="#00304c" strokeWidth=".7" />
    {/* cyan shaft and yoke */}
    <path d="M960 627 C958 605 975 588 998 588 C1012 588 1025 598 1032 610 L1127 768 L1057 794 L990 847 L963 798 L917 717 L935 690 Z" fill="url(#cCyan)" stroke="#184c50" strokeWidth=".7" />
    <path d="M940 721 L996 707 L1012 713 L1018 735 L1010 750 L970 790 L958 770 L937 717 Z" fill="#84cfcf" />
    <path d="M962 644 C958 630 960 618 970 612 M972 652 L1012 713 C1018 722 1018 738 1010 750 C1000 762 985 770 970 790 M960 645 L1001 712 M960 645 L972 652" fill="none" stroke="#174a4e" strokeWidth=".8" />
    <path d="M927 715 L958 770 M937 717 L965 763 C970 772 972 780 970 790 C968 796 966 797 963 798 M952 765 L964 762 L958 787" fill="none" stroke="#174a4e" strokeWidth=".8" />
    <path d="M966 768 C968 772 969 778 966 784" fill="none" stroke="#d6f4f4" strokeWidth="2" />
    {/* spider block */}
    <polygon points="958,615 985,690 940,721 933,713 958,685" fill="#d0ca6c" stroke="#4e4a22" strokeWidth=".6" />
    <polygon points="940,721 982,687 996,707" fill="#a5a14e" stroke="#4e4a22" strokeWidth=".6" />
    {/* blue yoke, barrel and near arm in one piece */}
    <path d="M893 500 H1051 V575 L987 573 C970 576 958 582 952 590 L947 604 V682 C947 695 940 708 926 716 L920 716 C905 716 893 695 893 660 Z" fill="url(#cBlue)" />
    <path d="M893 520 V660 C893 695 905 716 920 716 L926 716" fill="none" stroke="#00304c" strokeWidth=".7" />
    <path d="M987 573 C970 576 958 582 952 590" fill="none" stroke="#00304c" strokeWidth=".7" />
    <path d="M947 604 C948 597 952 592 958 590 L958 680 C958 696 945 712 926 716 C940 708 947 695 947 682 Z" fill="#00608f" stroke="#00304c" strokeWidth=".7" />
    <ellipse cx="913" cy="678" rx="13" ry="20" transform="rotate(-14 913 678)" fill="#c484c4" stroke="#111" strokeWidth=".8" />
    <ellipse cx="1012" cy="628" rx="16" ry="18" transform="rotate(-20 1012 628)" fill="#d08cd0" stroke="#111" strokeWidth=".8" />
    {/* bracket */}
    <polygon points="769,513 833,490 869,500 869,780 770,815" fill="#2b0080" stroke={L} strokeWidth=".8" />
    <polygon points="769,513 769,478 800,478 833,490" fill="url(#cArch)" stroke={L} strokeWidth=".8" />
    <path d="M770 816 L870 780 C870 805 882 820 900 824 L990 846 L950 880 C945 885 935 890 925 888 L802 859 C782 855 769 838 770 816 Z" fill="#3f00c2" stroke={L} strokeWidth=".8" />
    <line x1="802" y1="859" x2="900" y2="824" stroke={L} strokeWidth=".8" />
    <path d="M783 443 L873 410 C882 406 890 406 900 409 L1083 452 L983 488 L800 444 Z" fill="#3f00c0" stroke={L} strokeWidth=".8" />
    <line x1="800" y1="444" x2="900" y2="409" stroke={L} strokeWidth=".8" />
    <polygon points="983,488 1083,452 1083,490 983,526" fill="#2b0080" stroke={L} strokeWidth=".8" />
    <polygon points="1077,827 1176,792 1060,885 963,918" fill="#2b0080" stroke={L} strokeWidth=".8" />
    <polygon points="1057,794 1156,758 1176,792 1077,827" fill="#3f00c4" stroke={L} strokeWidth=".8" />
    <path d="M739 505 C739 470 760 441 790 441 L800 444 L983 488 L983 526 L795 482 C780 480 769 490 769 510 L769 816 C769 838 782 855 802 859 L925 888 C935 890 945 885 950 880 L1057 794 L1077 827 L963 918 C955 925 950 928 940 927 L802 898 C765 890 739 860 739 813 Z" fill="#4200c6" stroke={L} strokeWidth=".8" />
    {/* work plane and origin, faint */}
    <g stroke="#9a6ec8" strokeWidth=".5" fill="none" opacity=".45">
      <polygon points="883,853 935,851 940,925 890,930" />
      <polygon points="862,895 930,892 962,892 915,908" />
    </g>
    <line x1="912" y1="860" x2="912" y2="888" stroke="#4a38f0" strokeWidth="4" opacity=".7" />
    <line x1="912" y1="853" x2="912" y2="860" stroke="#b8b8ff" strokeWidth="1.5" />
    <line x1="912" y1="893" x2="945" y2="902" stroke="#b0109a" strokeWidth="4" opacity=".55" />
    <ellipse cx="930" cy="887" rx="6" ry="3" fill="#3a7a80" opacity=".6" />
    {/* crank */}
    <path d="M952 369 C960 376 975 377 984 374 L984 384 L990 384 L990 398 C990 407 952 407 952 398 Z" fill="url(#cGreen)" stroke="#0c2c00" strokeWidth=".7" />
    <path d="M984 374 L984 384 L1133 347 L1141 345 L1141 333 L1133 335 Z" fill="#2f8f00" stroke="#0c2c00" strokeWidth=".7" />
    <path d="M952 369 C955 364 960 364 962 363 L1108 327 L1130 326 C1138 326 1141 330 1141 333 L1133 335 L984 374 C975 377 960 376 952 369 Z" fill="#42c400" stroke="#0c2c00" strokeWidth=".7" />
    <path d="M942 398 L942 457 C942 467 1001 467 1001 457 L1001 398 Z" fill="url(#cGreen)" stroke="#0c2c00" strokeWidth=".7" />
    <path d="M942 398 C942 392 952 391 952 391 L952 398 C952 407 990 407 990 398 L990 391 C995 392 1001 393 1001 398 C1001 410 942 410 942 398 Z" fill="#44cc00" stroke="#0c2c00" strokeWidth=".7" />
    {/* knob */}
    <path d="M1111 312 L1111 331 C1111 336 1131 336 1131 331 L1131 312 Z" fill="url(#cStem)" />
    <path d="M1063 283 C1063 265 1085 255 1121 255 C1157 255 1179 265 1179 283 C1179 300 1160 316 1121 316 C1082 316 1063 300 1063 283 Z" fill="url(#cKnob)" />
    <path d="M1063 283 C1063 265 1085 255 1121 255 C1157 255 1179 265 1179 283 C1179 300 1160 316 1121 316 C1082 316 1063 300 1063 283 Z" fill="url(#cKnobShade)" />
    <ellipse cx="1121" cy="267" rx="40" ry="11" fill="#c40000" stroke="#400000" strokeWidth=".7" />
    {/* triad */}
    <line x1="392" y1="910" x2="392" y2="880" stroke="#1414e0" strokeWidth="5" />
    <polygon points="392,868 398,882 386,882" fill="#4a4af0" />
    <line x1="392" y1="910" x2="415" y2="901" stroke="#0a8a0a" strokeWidth="3.4" />
    <polygon points="420,899 408,896 413,907" fill="#1aa01a" />
    <line x1="392" y1="910" x2="415" y2="915" stroke="#dd1010" strokeWidth="3.4" />
    <polygon points="426,918 411,909 411,921" fill="#ef3030" />
    <text x="385" y="868" fontFamily="Liberation Sans" fontSize="22" fill="#2222ee">Z</text>
    <text x="418" y="906" fontFamily="Liberation Sans" fontSize="22" fill="#22ee22">Y</text>
    <text x="425" y="928" fontFamily="Liberation Sans" fontSize="22" fill="#ee2222">X</text>
  </Scene>
);

const App = () => (
  <Page>
    <GlobalStyle />
    <Paint />
    <TabBar>
      <FileButton>文件(F)</FileButton>
      <RibbonTab $active>造型</RibbonTab>
      {tabs.map((t) => (
        <RibbonTab key={t} $latin={t === "FTI" || t === "PMI"}>{t}</RibbonTab>
      ))}
    </TabBar>

    <Ribbon>
      {groups.map((g) => (
        <Group key={g.label} $w={g.w} $pad={g.pad} $last={g.last}>
          <GroupItems>
            {g.items.map(([t, w, icon, caret]) => (
              <Item key={t} $w={w}>
                {RI[icon]}
                <ItemLabel>{t}</ItemLabel>
                {caret ? <ItemCaret /> : null}
              </Item>
            ))}
          </GroupItems>
          <GroupFoot $shift={g.shift} $back={g.back}>{g.label}</GroupFoot>
          {g.launcher && (
            <Launcher>
              <svg width="11" height="11" viewBox="0 0 11 11">
                <path d="M1 9 V1 H9" fill="none" stroke="#888" />
                <path d="M4 4 L8 8 M10 4 V10 H4 Z" fill="#666" stroke="#666" />
              </svg>
            </Launcher>
          )}
        </Group>
      ))}
    </Ribbon>

    <ToolBar>
      <Grip />
      <Hot $w={26} $ml={6}>
        <T>
          <path d="M3 3 L3 19 L7 15 L10 21 L13 20 L10 14 L15 14 Z" fill="#1f8fb4" stroke="#0a5a78" strokeWidth=".6" />
          <circle cx="16" cy="8" r="5" fill="#ffd845" stroke="#c78c12" strokeWidth=".6" />
          <rect x="14.5" y="12.5" width="3" height="4" fill="#999" />
        </T>
      </Hot>
      <Slot $ml={1}>
        <T><path d="M9 2 H15 V9 H22 V15 H15 V22 H9 V15 H2 V9 H9 Z" fill="#9bc53d" stroke="#5f8a1c" strokeWidth=".8" /></T>
      </Slot>
      <Slot>
        <T><rect x="2" y="9" width="20" height="6" rx="2" fill="#d23030" stroke="#8f1616" strokeWidth=".6" /></T>
      </Slot>
      <Slot $w={26}>
        <T>
          <rect x="2" y="5" width="18" height="17" fill="none" stroke="#2a8da8" strokeWidth="1.6" strokeDasharray="2 1.6" />
          <path d="M11 9 V18 M6.5 13.5 H15.5 M19 1 V7 M16 4 H22" stroke="#cc2a2a" strokeWidth="1.6" />
        </T>
      </Slot>
      <Slot $w={9}><Caret $big /></Slot>
      <Slot $ml={7}>
        <T s={22}><circle cx="12" cy="12" r="9.5" fill="none" stroke="#2a8da8" strokeWidth="1.8" strokeDasharray="2.2 1.6" /></T>
      </Slot>
      <Sep $ml={4} />
      <Slot $w={26} $ml={3}>
        <T>
          <rect x="2" y="9" width="5" height="13" fill="#c32222" />
          <rect x="7" y="9" width="5" height="13" fill="#2c8a2c" />
          <rect x="12" y="9" width="5" height="13" fill="#2a3f9e" />
          <path d="M12 1 H23 L19 6 V11 H16 V6 Z" fill="#1f8fb4" />
        </T>
      </Slot>
      <Combo $w={121} $ml={3}>全部<Caret $big /></Combo>
      <Hot $w={27} $ml={1}>
        <T>
          <polygon points="1,13 13,4 23,11 11,21" fill="url(#rFront)" stroke="#0a5a78" strokeWidth=".7" />
          <polygon points="6,8 14,2 21,8 13,14" fill="url(#rYel)" stroke="#9a5a14" strokeWidth=".7" />
          <path d="M13 8 V16" stroke="#14698d" strokeWidth="2" />
        </T>
      </Hot>
      <Combo $w={165} $ml={1}>整个装配<Caret $big /></Combo>
      <Slot $ml={1}>
        <T s={20}>
          <circle cx="12" cy="12" r="9" fill="#c7cace" />
          <path d="M12 6 V12 H17" stroke="#e8e9eb" strokeWidth="1.4" fill="none" />
        </T>
      </Slot>
      <Slot>
        <T>
          <circle cx="12" cy="12" r="8.5" fill="none" stroke={GD} strokeWidth="3" strokeDasharray="6 2.5" />
          <path d="M8 8 L16 16 M16 8 L8 16" stroke="#c4c7ca" strokeWidth="2.4" />
        </T>
      </Slot>
      <Sep $ml={4} />
      <Slot $ml={3}><GrayNode /></Slot>
      <Slot><GrayNode tint /></Slot>
      <Slot><GrayNode /></Slot>
      <Slot><GrayNode /></Slot>
      <Slot>
        <T><path d="M6 3 L6 21 L10.5 16.5 L14 22 L16.5 20.5 L13.5 15 L19 14 Z" fill={GD} /></T>
      </Slot>
      <Slot>
        <T>
          <rect x="3" y="3" width="18" height="5" fill="#f2c84a" stroke="#999" strokeWidth=".5" />
          <path d="M5 5.5 H16 M13 3.5 L17 5.5 L13 7.5" stroke="#c32222" strokeWidth="1.2" fill="none" />
          <path d="M3 11 H21 M3 15 H21 M3 19 H21" stroke="#8e9399" strokeWidth="2" />
        </T>
      </Slot>
      <Slot>
        <T>
          <rect x="3" y="2" width="15" height="20" fill="#2b9bbf" stroke="#0a5a78" strokeWidth=".7" />
          <rect x="9" y="8" width="12" height="13" fill="#f5c53d" stroke="#c32222" strokeDasharray="2 1" />
          <path d="M13 12 L21 20" stroke="#c32222" strokeWidth="1.6" />
        </T>
      </Slot>
      <Slot>
        <T>
          <rect x="8" y="2" width="14" height="20" fill="#2b9bbf" stroke="#0a5a78" strokeWidth=".7" />
          <circle cx="10" cy="13" r="7" fill="#e8d9a0" stroke="#8a6a20" strokeWidth=".7" />
          <path d="M4 13 A6 6 0 0 1 15 9 L10 13 Z" fill="#e89a5a" />
          <path d="M10 13 L15 17 A6 6 0 0 1 10 19 Z" fill="#3ca86a" />
        </T>
      </Slot>
      <Sep $ml={4} />
      <Slot $ml={2}>
        <T>
          <circle cx="12" cy="12" r="9" fill="none" stroke={G} strokeWidth="1.6" />
          <path d="M12 1 V4 M12 20 V23 M1 12 H4 M20 12 H23" stroke={G} strokeWidth="1.6" />
          <path d="M10 6 L10 17 L13 14.5 L17 13 Z" fill={GD} />
        </T>
      </Slot>
      <Slot>
        <GrayLine>
          <path d="M7 20 V8 C7 4 10 3 12 3 C15 3 17 5 17 8 V20 M4 6 V10" />
          <Dot x={17} y={21} />
          <Dot x={7} y={4} />
        </GrayLine>
      </Slot>
      <Slot>
        <T>
          <rect x="5" y="4" width="15" height="15" fill="#f1f2f3" stroke="#b5b9bd" />
          <rect x="8" y="7" width="10" height="10" fill="#5c6064" />
        </T>
      </Slot>
      <Combo $w={120} $ml={2} $off>法向<Caret $c="#aeb2b6" $big /></Combo>
      <Slot>
        <T>
          <path d="M4 2 L4 19 L9 15 L12 22 L15 20.5 L12.5 13.5 L18 13 Z" fill={G} stroke={GD} strokeWidth=".5" />
          <rect x="13" y="15" width="8" height="7" rx="2" fill="#e4e5e7" stroke={GD} strokeWidth=".6" />
        </T>
      </Slot>
      <Slot>
        <T>
          <circle cx="15" cy="9" r="5.5" fill="none" stroke={G} strokeWidth="3.4" strokeDasharray="3 1.3" />
          <circle cx="15" cy="9" r="2.5" fill="none" stroke={GD} strokeWidth="1.2" />
          <path d="M3 9 L3 22 L6.5 19 L9 23 L11 22 L9 18 L13 17.5 Z" fill={GD} />
        </T>
      </Slot>
      <Slot>
        <GrayLine>
          <circle cx="12" cy="12" r="8.5" />
          <path d="M9.5 7 L9.5 17 L17 12 Z" fill={G} stroke="none" />
        </GrayLine>
      </Slot>
      <Slot>
        <T>
          {[[4, 10], [9, 8], [12, 4], [13, 12], [17, 10], [20, 8], [13, 18]].map(([x, y]) => (
            <Dot key={`${x}${y}`} x={x} y={y} r={1.4} />
          ))}
        </T>
      </Slot>
      <Slot>
        <GrayLine>
          <path d="M3 21 L18 6" />
          <Dot x={19} y={5} r={2.6} />
        </GrayLine>
      </Slot>
      <Slot>
        <GrayLine>
          <path d="M3 21 L21 3" />
          <Dot x={12} y={12} r={2.6} />
        </GrayLine>
      </Slot>
      <Slot>
        <GrayLine>
          <circle cx="12" cy="12" r="8.5" />
          <Dot x={12} y={12} r={2} />
        </GrayLine>
      </Slot>
      <Slot>
        <GrayLine>
          <circle cx="12" cy="12" r="8.5" />
          <Dot x={12} y={3.5} />
          <Dot x={3.5} y={12} />
          <Dot x={20.5} y={12} />
          <Dot x={12} y={20.5} />
        </GrayLine>
      </Slot>
      <Slot>
        <GrayLine>
          <path d="M3 14 C6 9 7 6 9 6 C12 6 13 20 16 20 C19 20 20 14 21 11" />
          <Dot x={9} y={6} />
          <Dot x={9} y={2} r={1.3} />
          <Dot x={16} y={20} />
          <Dot x={21} y={10} />
        </GrayLine>
      </Slot>
      <Slot>
        <GrayLine>
          <path d="M3 16 C5 9 7 6 9 6 C12 6 13 18 16 18 C19 18 20 12 21 10" />
          <Dot x={9} y={6} />
        </GrayLine>
      </Slot>
      <Slot>
        <GrayLine>
          <path d="M3 8 C8 3 16 3 21 8 M6 21 C6 12 9 6 12 6 C15 6 18 12 18 21" />
          <Dot x={12} y={5} />
        </GrayLine>
      </Slot>
      <Slot>
        <GrayLine>
          <path d="M3 21 L21 3" />
          <Dot x={17} y={7} r={2.6} />
        </GrayLine>
      </Slot>
      <Slot><GrayStack /></Slot>
      <Slot><GrayStack /></Slot>
    </ToolBar>

    <TitleRow>
      <ManagerHead>
        <ManagerName>管理器</ManagerName>
        <svg width="13" height="11" viewBox="0 0 13 11" style={{ marginRight: 11 }}>
          <rect x="1" y="1" width="11" height="9" rx="1" fill="none" stroke="#999" strokeWidth="1.4" />
          <rect x="3.5" y="4" width="6" height="3" fill="#aaa" />
        </svg>
        <svg width="16" height="12" viewBox="0 0 16 12">
          <path d="M2 1.5 L14 10.5 M14 1.5 L2 10.5" stroke="#b3b7bc" strokeWidth="3.2" />
        </svg>
      </ManagerHead>
      <DocTabs>
        <DocTab>
          万向节-ASS.Z3ASM
          <DocClose>
            <svg width="12" height="12" viewBox="0 0 12 12">
              <path d="M1 1 L11 11 M11 1 L1 11" stroke="#7d6a4c" strokeWidth="2.2" />
            </svg>
          </DocClose>
        </DocTab>
        <AddTab>
          <svg width="14" height="14" viewBox="0 0 14 14">
            <path d="M7 1 V13 M1 7 H13" stroke="#9a9ea3" strokeWidth="2" />
          </svg>
        </AddTab>
      </DocTabs>
    </TitleRow>

    <Body>
      <Side>
        <Rail>
          <RailTab>
            <svg width="32" height="34" viewBox="0 0 32 34">
              <polygon points="9,2 18,6 10,10 1,6" fill="url(#rTop)" stroke="#5d9cb6" strokeWidth=".7" />
              <polygon points="1,6 10,10 10,20 1,16" fill="#cfe9f2" stroke="#5d9cb6" strokeWidth=".7" />
              <polygon points="10,10 18,6 18,16 10,20" fill="url(#rFront)" stroke="#5d9cb6" strokeWidth=".7" />
              <path d="M10 21 V33 M10 27 H16 M18 13 H30" stroke="#6a8ea0" strokeWidth="1.3" fill="none" />
              <rect x="17" y="23" width="12" height="8" fill="#fff" stroke="#6a8ea0" strokeWidth="1.3" />
            </svg>
          </RailTab>
          <RailTab $active>
            <svg width="28" height="24" viewBox="0 0 28 24">
              <rect x="9" y="0" width="12" height="7" fill="#1c9fc4" />
              <path d="M15 7 V12 M7 17 V12 H21 V17" fill="none" stroke="#2b7f9e" strokeWidth="1" />
              <rect x="1" y="16" width="12" height="7" fill="#1c9fc4" />
              <rect x="15" y="16" width="12" height="7" fill="#d6edf4" stroke="#9fc8d8" />
            </svg>
          </RailTab>
          <RailTab>
            <svg width="30" height="30" viewBox="0 0 30 30">
              <rect x="1" y="1" width="28" height="28" fill="#e6f3f7" stroke="#3c9abb" strokeWidth="1.2" />
              <rect x="1" y="1" width="28" height="4" fill="#2b9bbf" />
              <polygon points="15,9 24,13 15,17 6,13" fill="#ffe36a" stroke="#b87a14" strokeWidth=".6" />
              <polygon points="6,13 15,17 15,26 6,22" fill="#fbc02d" stroke="#b87a14" strokeWidth=".6" />
              <polygon points="15,17 24,13 24,22 15,26" fill="#e98f1a" stroke="#b87a14" strokeWidth=".6" />
            </svg>
          </RailTab>
          <RailTab>
            <svg width="31" height="31" viewBox="0 0 31 31">
              <rect x="0.5" y="0.5" width="30" height="30" fill="#d8eef5" stroke="#3c9abb" />
              <circle cx="21" cy="8" r="6" fill="#f5b53a" stroke="#c9881a" strokeWidth=".6" />
              <path d="M1 16 C5 8 10 10 13 15 C16 19 22 13 30 16 V30 H1 Z" fill="#1f8fb4" />
              <path d="M1 22 C8 18 18 21 30 19 V30 H1 Z" fill="#5ab8d2" />
              <path d="M1 17 H11 V13 L19 20 L11 27 V23 H1 Z" fill="#ea7a2c" stroke="#c25a14" strokeWidth=".5" />
            </svg>
          </RailTab>
          <RailTab>
            <svg width="31" height="26" viewBox="0 0 31 26">
              <circle cx="21" cy="7" r="6" fill="#f5b53a" stroke="#bd8016" strokeWidth=".7" />
              <path d="M14 21 C15 14 27 12 30 22 L18 25 Z" fill="#f5b53a" stroke="#bd8016" strokeWidth=".7" />
              <circle cx="12" cy="9" r="6.5" fill="#62bcd6" stroke="#1c7c9e" strokeWidth=".7" />
              <path d="M1 25 C3 17 8 15 12 15 C17 15 21 17 23 25 Z" fill="#2ba0c4" stroke="#1c7c9e" strokeWidth=".7" />
            </svg>
          </RailTab>
        </Rail>
        <ManagerPane>
          <FilterRow>
            <FilterCombo $w={102}>显示所有<Caret $big /></FilterCombo>
            <FilterCombo $w={154} />
            <FilterButton $w={30}>
              <svg width="22" height="22" viewBox="0 0 22 22">
                <path d="M1 2 H21 L13.5 11 V20 L8.5 21 V11 Z" fill="#24a0c8" stroke="#1a7fa2" strokeWidth=".6" />
              </svg>
            </FilterButton>
          </FilterRow>
          <TreePane>
            <TreeHead>
              <TreeHeadCell>装配节点</TreeHeadCell>
            </TreeHead>
            <Row>
              <RowMain $indent={3}>
                <Expander><Chevron /></Expander>
                <RowIcon $mr={1}>
                  <T s={22}>
                    <rect x="7" y="4" width="8" height="6" fill="#1c9fc4" />
                    <path d="M11 10 V14 M5 17 V14 H17 V17" stroke="#555" fill="none" />
                    <rect x="1" y="16" width="9" height="6" fill="#1c9fc4" />
                    <rect x="13" y="16" width="9" height="6" fill="#1c9fc4" />
                    <path d="M14 9 L22 1 L24 3 L16 11 L13 12 Z" fill="#f1b632" stroke="#94641a" strokeWidth=".5" />
                  </T>
                </RowIcon>
                <RootLabel>万向节-ASS</RootLabel>
              </RowMain>
            </Row>
            {parts.map(([label], i) => (
              <Row key={i} $odd={i % 2 === 0}>
                <RowMain $indent={39}>
                  <CheckBox><Tick c="#f01818" /></CheckBox>
                  <RowIcon $mr={3}><Cube /></RowIcon>
                  <span>{label}</span>
                </RowMain>
              </Row>
            ))}
            <Row $odd>
              <RowMain $indent={21}>
                <Expander><Chevron /></Expander>
                <RowIcon $mr={4}>
                  <T s={20}>
                    <path d="M2 5 H9 L11 7 H20 V20 H2 Z" fill="#f2a93b" stroke="#b3741a" strokeWidth=".7" />
                    <path d="M4 10 H22 L20 20 H2 Z" fill="#ffd36a" stroke="#b3741a" strokeWidth=".7" />
                  </T>
                </RowIcon>
                约束
              </RowMain>
            </Row>
            {constraints.map(([kind, label], i) => (
              <Row key={i} $odd={i % 2 === 1}>
                <RowMain $indent={57}>
                  <CheckBox><Tick c="#0c9a18" /></CheckBox>
                  <RowIcon $mr={3}><ConstraintIcon kind={kind} /></RowIcon>
                  <span>{label}</span>
                </RowMain>
              </Row>
            ))}
            <Row $odd />
          </TreePane>
        </ManagerPane>
      </Side>

      <Viewport>
        <ViewBar>
          <Slot $w={24}>
            <T>
              <path d="M9 4 H20 V20 H9 M3 12 H14 M7 8 L3 12 L7 16" fill="none" stroke="#a5a9ad" strokeWidth="2.4" />
            </T>
          </Slot>
          <Slot $w={24} $ml={5}>
            <T>
              <path d="M3 15 L15 11 L22 18 L10 23 Z" fill="#d9f2c8" stroke="#2fb344" strokeWidth="1" />
              <path d="M6 17 L17 13 M8 19 L19 15" stroke="#2fb344" strokeWidth="1" />
              <circle cx="8" cy="6" r="4.5" fill="#9fd5e8" stroke="#4f8aa8" />
              <rect x="6" y="9" width="5" height="9" fill="#e89a3c" />
              <path d="M21 7 V18" stroke="#d9963a" strokeWidth="1.4" />
            </T>
          </Slot>
          <Slot $w={10} $ml={2}><Caret /></Slot>
          <Slot $w={24} $ml={8}>
            <T>
              <path d="M17 5 L20 8 L11 18 L7 14 Z" fill="#f5e3c2" stroke="#a9844c" strokeWidth=".6" />
              <path d="M7 14 L11 18 L8 20 L5 17 Z" fill="#d63a3a" />
            </T>
          </Slot>
          <Slot $w={24} $ml={4}>
            <T>
              <polygon points="12,4 22,9 12,14 2,9" fill="#ffdc3d" stroke="#b8841a" strokeWidth=".6" />
              <polygon points="2,9 12,14 12,23 2,18" fill="#c7e9f2" stroke="#3d8ea8" strokeWidth=".6" />
              <polygon points="12,14 22,9 22,18 12,23" fill="#1f8fb4" stroke="#0a5a78" strokeWidth=".6" />
              <path d="M12 9 V2" stroke="#1c9a2c" strokeWidth="1.4" />
              <polygon points="12,0 14.5,3.5 9.5,3.5" fill="#1c9a2c" />
            </T>
          </Slot>
          <Slot $w={24} $ml={5}><Cube s={22} /></Slot>
          <Slot $w={10} $ml={3}><Caret /></Slot>
          <Slot $w={24} $ml={7}>
            <T>
              <polygon points="12,2 22,7 12,12 2,7" fill="#fff" stroke="#8fb4c4" />
              <polygon points="2,7 12,12 12,23 2,17" fill="#fff" stroke="#8fb4c4" />
              <polygon points="12,12 22,7 22,17 12,23" fill="#fff" stroke="#8fb4c4" />
            </T>
          </Slot>
          <Slot $w={10} $ml={3}><Caret /></Slot>
          <Slot $w={24} $ml={7}>
            <T>
              <polygon points="8,2 19,3 23,13 14,22 3,18 1,8" fill="#fbc445" stroke="#b8501e" strokeWidth=".9" />
              <path d="M1 8 L12 12 L8 2 M12 12 L19 3 M12 12 L23 13 M12 12 L14 22 M12 12 L3 18" stroke="#c0582a" strokeWidth=".7" fill="none" />
            </T>
          </Slot>
          <Slot $w={10} $ml={3}><Caret /></Slot>
          <Slot $w={24} $ml={7}>
            <T>
              <rect x="2" y="1" width="19" height="21" fill="#2b9bbf" stroke="#0a5a78" strokeWidth=".7" />
              <rect x="4" y="3" width="15" height="17" fill="#cfe5ee" />
              <circle cx="11" cy="11" r="6.5" fill="#f5e9b8" stroke="#b48a20" strokeWidth="1.6" />
              <rect x="8.5" y="7" width="5" height="8" fill="#eef0f2" stroke="#8a9096" strokeWidth=".6" />
            </T>
          </Slot>
          <Slot $w={10} $ml={3}><Caret /></Slot>
          <Slot $w={24} $ml={7}>
            <T>
              <rect x="3" y="3" width="18" height="18" fill="#fff" stroke="#7fa8ba" strokeWidth="1.2" />
              <rect x="6" y="15" width="4" height="4" fill="#1f8fb4" />
              <path d="M7 13 V10 C7 8 9 7 12 7 H15 M15 5 L18 7 L15 9" fill="none" stroke="#8ecbe0" strokeWidth="1.2" />
            </T>
          </Slot>
          <Slot $w={24} $ml={6}>
            <T>
              <path d="M4 1 V17 M20 1 V17" stroke="#2b88aa" strokeWidth="1.8" />
              <path d="M4 9 H20 M4 9 L7 7 V11 Z M20 9 L17 7 V11 Z" stroke="#2b88aa" fill="#2b88aa" strokeWidth="1" />
              <path d="M4 21 H20" stroke="#c32222" strokeWidth="2.4" />
            </T>
          </Slot>
          <Slot $w={10} $ml={2}><Caret /></Slot>
          <Slot $w={24} $ml={7}>
            <T>
              <rect x="2" y="2" width="20" height="17" fill="#6e7f9a" stroke="#555" strokeWidth="1.4" />
              <rect x="4" y="4" width="16" height="6" fill="#a0a8ba" />
              <rect x="5" y="20" width="14" height="3" rx="1" fill="#aaa" />
            </T>
          </Slot>
          <Slot $w={10} $ml={3}><Caret /></Slot>
          <Slot $w={24} $ml={7}>
            <T><rect x="2" y="7" width="20" height="11" fill="#000" stroke="#777" /></T>
          </Slot>
          <Slot $w={24} $ml={5}>
            <T><rect x="2.5" y="3" width="19" height="19" fill="#bde3f2" stroke="#222" strokeWidth="1.2" /></T>
          </Slot>
          <Slot $w={24} $ml={5}>
            <T>
              <polygon points="2,14 12,20 23,13 13,7" fill="#dfe3e6" stroke="#888" strokeWidth=".7" />
              <polygon points="2,11 12,17 23,10 13,4" fill="#42bfa6" stroke="#2f8a7a" strokeWidth=".7" />
              <path d="M2 16 L12 22 L23 15" fill="none" stroke="#888" strokeWidth="1" />
            </T>
          </Slot>
          <Slot $w={10} $ml={3}><Caret /></Slot>
          <LayerBox>
            <svg width="10" height="18" viewBox="0 0 10 18">
              <path d="M5 1 C8 1 9 3 9 5 C9 8 7 9 7 12 H3 C3 9 1 8 1 5 C1 3 2 1 5 1 Z" fill="#fff9d0" stroke="#9a8a4a" />
              <rect x="3" y="13" width="4" height="3" fill="#9aa0a6" />
            </svg>
            <svg width="14" height="14" viewBox="0 0 14 14" style={{ marginLeft: 6 }}>
              <circle cx="7" cy="7" r="6" fill="#f2d93a" stroke="#4f8aa8" />
            </svg>
            <LayerName>Layer0000</LayerName>
            <Caret $big />
          </LayerBox>
        </ViewBar>
        <Model />
      </Viewport>
    </Body>
  </Page>
);

export default App;
